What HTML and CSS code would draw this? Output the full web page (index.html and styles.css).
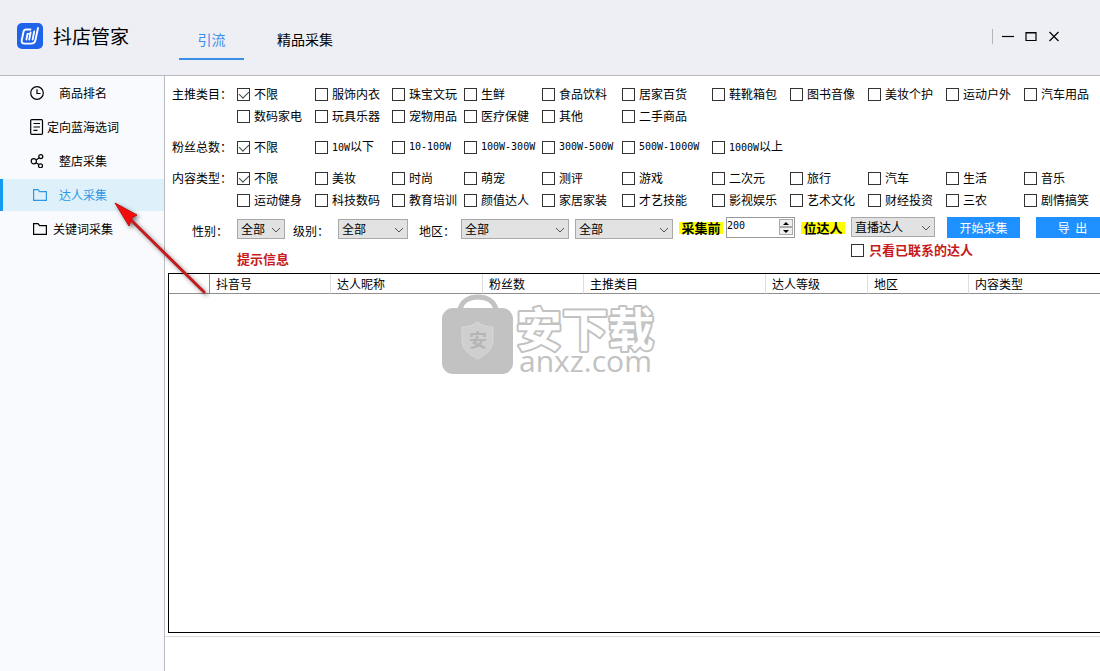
FILE: index.html
```html
<!DOCTYPE html>
<html lang="zh-CN">
<head>
<meta charset="utf-8">
<title>抖店管家</title>
<link rel="stylesheet" href="styles.css">
</head>
<body>
<div class="app">
  <header class="topbar">
    <div class="brand">
      <svg class="logo" viewBox="0 0 26 26" aria-hidden="true">
        <rect width="26" height="26" rx="5" fill="#1f63ea"/>
        <g fill="none" stroke="#fff" stroke-linecap="round" stroke-linejoin="round">
          <path stroke-width="1.9" d="M13.500 6.500H9.200Q7 6.500 6.500 8.700L4.700 17.400Q4.400 20.600 7.500 20.600H14Q17.800 20.600 18.500 16.800L21 5"/>
          <path stroke-width="1.8" d="M9.400 16.500L10.500 10.800H11.500M13.600 9.500L12.200 16.500M17.200 8.500L15.600 16.500"/>
        </g>
      </svg>
      <h1 class="brand-name">抖店管家</h1>
    </div>
    <nav class="tabs">
      <a class="tab tab-active" href="#">引流</a>
      <a class="tab" href="#">精品采集</a>
    </nav>
    <div class="window-controls">
      <button class="win-btn" aria-label="最小化"><svg viewBox="0 0 12 12"><path d="M0 5.500h12"/></svg></button>
      <button class="win-btn" aria-label="最大化"><svg viewBox="0 0 12 12"><path d="M1 1.500h10v8H1zM1 2h10"/></svg></button>
      <button class="win-btn" aria-label="关闭"><svg viewBox="0 0 12 12"><path d="M1.500 1l9 9M10.500 1l-9 9"/></svg></button>
    </div>
  </header>

  <div class="body">
    <nav class="sidebar">
      <a class="side-item" href="#">
        <svg class="side-icon" viewBox="0 0 14 14"><circle cx="7" cy="7" r="6.300"/><path d="M7 3.200V7.500H10.500"/></svg>
        <span>商品排名</span>
      </a>
      <a class="side-item side-item-tight" href="#">
        <svg class="side-icon side-icon-tall" viewBox="0 0 14 16"><rect x=".7" y=".7" width="11.800" height="14.600" rx="1"/><path d="M3.500 4.500h6.500M3.500 8h6.500M3.500 11.300h4"/></svg>
        <span>定向蓝海选词</span>
      </a>
      <a class="side-item" href="#">
        <svg class="side-icon" viewBox="0 0 14 14"><circle cx="3.800" cy="7.300" r="2.600"/><circle cx="10.800" cy="2.600" r="2"/><circle cx="10.500" cy="11.800" r="2"/><path d="M6.100 5.900L9 4M6.100 8.800L8.800 10.600"/></svg>
        <span>整店采集</span>
      </a>
      <a class="side-item side-item-folder side-item-active" href="#">
        <svg class="side-icon" viewBox="0 0 14 14"><path d="M.6 1.600H5L6.700 3.600H13.400V12.400H.6Z"/></svg>
        <span>达人采集</span>
      </a>
      <a class="side-item side-item-folder side-item-near" href="#">
        <svg class="side-icon" viewBox="0 0 14 14"><path d="M.6 1.600H5L6.700 3.600H13.400V12.400H.6Z"/></svg>
        <span>关键词采集</span>
      </a>
    </nav>

    <main class="main">
      <form class="filters">
        <fieldset class="group">
          <legend class="group-name">主推类目：</legend>
          <div class="options">
            <label class="option"><input type="checkbox" class="check" checked>不限</label>
            <label class="option"><input type="checkbox" class="check">服饰内衣</label>
            <label class="option"><input type="checkbox" class="check">珠宝文玩</label>
            <label class="option"><input type="checkbox" class="check">生鲜</label>
            <label class="option"><input type="checkbox" class="check">食品饮料</label>
            <label class="option"><input type="checkbox" class="check">居家百货</label>
            <label class="option"><input type="checkbox" class="check">鞋靴箱包</label>
            <label class="option"><input type="checkbox" class="check">图书音像</label>
            <label class="option"><input type="checkbox" class="check">美妆个护</label>
            <label class="option"><input type="checkbox" class="check">运动户外</label>
            <label class="option"><input type="checkbox" class="check">汽车用品</label>
            <label class="option"><input type="checkbox" class="check">数码家电</label>
            <label class="option"><input type="checkbox" class="check">玩具乐器</label>
            <label class="option"><input type="checkbox" class="check">宠物用品</label>
            <label class="option"><input type="checkbox" class="check">医疗保健</label>
            <label class="option"><input type="checkbox" class="check">其他</label>
            <label class="option"><input type="checkbox" class="check">二手商品</label>
          </div>
        </fieldset>
        <fieldset class="group">
          <legend class="group-name">粉丝总数：</legend>
          <div class="options">
            <label class="option"><input type="checkbox" class="check" checked>不限</label>
            <label class="option"><input type="checkbox" class="check"><span><span class="num">10W</span>以下</span></label>
            <label class="option"><input type="checkbox" class="check"><span class="num">10-100W</span></label>
            <label class="option"><input type="checkbox" class="check"><span class="num">100W-300W</span></label>
            <label class="option"><input type="checkbox" class="check"><span class="num">300W-500W</span></label>
            <label class="option"><input type="checkbox" class="check"><span class="num">500W-1000W</span></label>
            <label class="option"><input type="checkbox" class="check"><span><span class="num">1000W</span>以上</span></label>
          </div>
        </fieldset>
        <fieldset class="group">
          <legend class="group-name">内容类型：</legend>
          <div class="options">
            <label class="option"><input type="checkbox" class="check" checked>不限</label>
            <label class="option"><input type="checkbox" class="check">美妆</label>
            <label class="option"><input type="checkbox" class="check">时尚</label>
            <label class="option"><input type="checkbox" class="check">萌宠</label>
            <label class="option"><input type="checkbox" class="check">测评</label>
            <label class="option"><input type="checkbox" class="check">游戏</label>
            <label class="option"><input type="checkbox" class="check">二次元</label>
            <label class="option"><input type="checkbox" class="check">旅行</label>
            <label class="option"><input type="checkbox" class="check">汽车</label>
            <label class="option"><input type="checkbox" class="check">生活</label>
            <label class="option"><input type="checkbox" class="check">音乐</label>
            <label class="option"><input type="checkbox" class="check">运动健身</label>
            <label class="option"><input type="checkbox" class="check">科技数码</label>
            <label class="option"><input type="checkbox" class="check">教育培训</label>
            <label class="option"><input type="checkbox" class="check">颜值达人</label>
            <label class="option"><input type="checkbox" class="check">家居家装</label>
            <label class="option"><input type="checkbox" class="check">才艺技能</label>
            <label class="option"><input type="checkbox" class="check">影视娱乐</label>
            <label class="option"><input type="checkbox" class="check">艺术文化</label>
            <label class="option"><input type="checkbox" class="check">财经投资</label>
            <label class="option"><input type="checkbox" class="check">三农</label>
            <label class="option"><input type="checkbox" class="check">剧情搞笑</label>
          </div>
        </fieldset>

        <div class="toolbar">
          <div class="field">
            <label class="field-name" for="gender">性别：</label>
            <div class="picker picker-xs"><select id="gender"><option>全部</option></select><svg viewBox="0 0 10 6"><path d="M1 1l4 4 4-4"/></svg></div>
          </div>
          <div class="field">
            <label class="field-name" for="level">级别：</label>
            <div class="picker picker-s"><select id="level"><option>全部</option></select><svg viewBox="0 0 10 6"><path d="M1 1l4 4 4-4"/></svg></div>
          </div>
          <div class="field field-area">
            <label class="field-name" for="province">地区：</label>
            <div class="picker picker-l"><select id="province"><option>全部</option></select><svg viewBox="0 0 10 6"><path d="M1 1l4 4 4-4"/></svg></div>
            <div class="picker picker-m"><select id="city" aria-label="城市"><option>全部</option></select><svg viewBox="0 0 10 6"><path d="M1 1l4 4 4-4"/></svg></div>
          </div>
          <div class="limit">
            <label class="mark" for="limit">采集前</label>
            <div class="spinner">
              <input id="limit" class="spinner-input" type="text" value="200">
              <div class="spinner-buttons">
                <button type="button" aria-label="增加"><svg viewBox="0 0 6 3"><path d="M3 0l3 3H0z"/></svg></button>
                <button type="button" aria-label="减少"><svg viewBox="0 0 6 3"><path d="M3 3l3-3H0z"/></svg></button>
              </div>
            </div>
            <label class="mark" for="kind">位达人</label>
            <div class="picker picker-kind"><select id="kind"><option>直播达人</option></select><svg viewBox="0 0 10 6"><path d="M1 1l4 4 4-4"/></svg></div>
          </div>
          <div class="actions">
            <button type="button" class="action">开始采集</button>
            <button type="button" class="action">导&nbsp; 出</button>
          </div>
        </div>
        <div class="notes">
          <p class="hint">提示信息</p>
          <label class="contacted"><input type="checkbox" class="check">只看已联系的达人</label>
        </div>
      </form>

      <section class="results">
        <table class="grid">
          <colgroup>
            <col class="c-index"><col class="c-id"><col class="c-nick"><col class="c-fans"><col class="c-category"><col class="c-level"><col class="c-area"><col>
          </colgroup>
          <thead>
            <tr><th></th><th>抖音号</th><th>达人昵称</th><th>粉丝数</th><th>主推类目</th><th>达人等级</th><th>地区</th><th>内容类型</th></tr>
          </thead>
        </table>
      </section>
      <footer class="statusbar"></footer>
    </main>
  </div>

  <svg class="watermark" viewBox="0 0 220 88" aria-hidden="true">
    <path d="M18 15C20 7 27 3 36 3s16 4 18 12" fill="none" stroke="#c2c2c2" stroke-width="5"/>
    <rect y="14" width="71" height="66" rx="11" fill="#c2c2c2"/>
    <path d="M20 33Q29 33 35.500 28Q42 33 51 33V48Q50 58 35.500 65Q21 58 20 48Z" fill="#cfcfcf" stroke="#d8d8d8"/>
    <text class="wm-shield" x="36" y="53" text-anchor="middle">安</text>
    <text class="wm-name" x="74" y="52">安下载</text>
    <text class="wm-site" x="77" y="78">anxz.com</text>
  </svg>

  <svg class="pointer" viewBox="0 0 100 100" aria-hidden="true">
    <path class="pointer-shaft" d="M21 20L94 92"/>
    <path class="pointer-head" d="M5 3L27 15L22 18L19 26Z"/>
  </svg>
</div>
</body>
</html>
```

FILE: styles.css
```css
* { box-sizing: border-box; }

body {
  margin: 0;
  font-family: "Noto Sans CJK SC", sans-serif;
  font-size: 12px;
  line-height: 16px;
  color: #000;
  background: #fff;
}

button, select, input { font: inherit; color: inherit; margin: 0; }
a { color: inherit; text-decoration: none; }

.app {
  position: relative;
  display: flex;
  flex-direction: column;
  min-height: 100vh;
  overflow: hidden;
}

/* Top bar */
.topbar {
  display: flex;
  height: 76px;
  background: #eeeff5;
  border-bottom: 1px solid #b9b9c1;
}
.brand {
  display: flex;
  align-items: center;
  gap: 10px;
  width: 179px;
  padding: 0 0 4px 17px;
}
.logo { width: 26px; height: 26px; }
.brand-name { margin: 0; font-size: 19px; line-height: 26px; font-weight: 400; }
.tabs { display: flex; gap: 16px; padding-top: 20px; height: 60px; }
.tab {
  padding: 8px 17px 0;
  min-width: 65px;
  text-align: center;
  font-size: 14px;
  line-height: 22px;
  border-bottom: 2px solid transparent;
}
.tab-active { color: #3a90e5; border-bottom-color: #3a90e5; }
.window-controls {
  display: flex;
  align-items: center;
  gap: 11px;
  height: 15px;
  margin: 29px 40px 0 auto;
  padding-left: 9px;
  border-left: 1px solid #b5b5b9;
}
.win-btn { display: flex; padding: 0; border: 0; background: none; }
.win-btn svg { width: 12px; height: 12px; fill: none; stroke: #000; stroke-width: 1.2; }

.body { display: flex; flex: 1; }

/* Sidebar */
.sidebar {
  display: flex;
  flex-direction: column;
  flex: none;
  gap: 2px;
  width: 165px;
  padding-top: 1px;
  background: #f8fafd;
  border-right: 1px solid #b9bbc1;
}
.side-item {
  display: flex;
  align-items: center;
  gap: 15px;
  height: 32px;
  padding-left: 27px;
  border-left: 3px solid transparent;
}
.side-item-tight { gap: 3px; }
.side-item-folder { gap: 12px; padding-left: 30px; }
.side-item-near { gap: 6px; }
.side-item-active { color: #2f97e3; background: #def1fb; border-left-color: #129bf0; }
.side-icon { width: 14px; height: 14px; fill: none; stroke: currentColor; stroke-width: 1.2; }
.side-icon-tall { height: 16px; }

/* Filters */
.main { display: flex; flex-direction: column; flex: 1; min-width: 0; overflow: hidden; }
.filters { padding: 7px 0 0 7px; }
.group {
  display: flex;
  margin: 0 0 9px;
  padding: 0;
  border: 0;
  min-width: 0;
}
.group:last-of-type { margin-bottom: 6px; }
.group-name { float: left; flex: none; width: 65px; padding: 0; line-height: 22px; }
.options {
  display: grid;
  flex: none;
  grid-template-columns: 78px 77px 72px 78px 80px 90px repeat(5, 78px);
  grid-auto-rows: 22px;
}
.option { display: flex; align-items: center; gap: 4px; white-space: nowrap; }
.num { font-family: "DejaVu Sans Mono", monospace; font-size: 10px; }
.check {
  appearance: none;
  display: flex;
  flex: none;
  justify-content: center;
  width: 13px;
  height: 13px;
  background: #fff;
  border: 1px solid #333;
}
.check:checked::after {
  content: "";
  width: 5px;
  height: 8px;
  border: solid #444;
  border-width: 0 1px 1px 0;
  transform: rotate(45deg);
}

/* Toolbar */
.toolbar { display: flex; align-items: flex-start; height: 27px; }
.toolbar > * { flex: none; }
.field { display: flex; gap: 9px; margin: 2px 8px 0 20px; }
.field + .field { margin-left: 0; }
.field-name { width: 36px; padding-top: 4px; white-space: nowrap; }
.toolbar .field-area { gap: 6px; padding-left: 3px; margin-right: 6px; }
.picker { position: relative; height: 20px; }
.picker select {
  appearance: none;
  display: block;
  width: 100%;
  height: 20px;
  padding: 0 16px 0 3px;
  line-height: 18px;
  background: #e2e2e2;
  border: 1px solid #a9a9a9;
  border-radius: 0;
}
.picker svg {
  position: absolute;
  right: 4px;
  top: 8px;
  width: 10px;
  height: 6px;
  fill: none;
  stroke: #555;
  pointer-events: none;
}
.picker-xs { width: 48px; }
.picker-s { width: 70px; }
.picker-m { width: 98px; }
.picker-l { width: 108px; }
.picker-kind { width: 84px; }
.limit { display: flex; align-items: flex-start; }
.mark {
  width: 44px;
  margin-top: 5px;
  text-align: center;
  font-size: 13px;
  line-height: 12px;
  font-weight: 700;
  background: #ff0;
}
.spinner {
  display: flex;
  width: 69px;
  height: 21px;
  margin: 0 6px 0 3px;
  border: 1px solid #999;
  background: #fff;
}
.limit .picker { margin-left: 6px; }
.spinner-input {
  flex: 1;
  min-width: 0;
  height: 16px;
  padding: 0;
  border: 0;
  background: none;
  font-family: "DejaVu Sans Mono", monospace;
  font-size: 10px;
}
.spinner-buttons { display: flex; flex-direction: column; padding: 1px; }
.spinner-buttons button {
  display: flex;
  align-items: center;
  justify-content: center;
  width: 14px;
  height: 8px;
  padding: 0;
  background: #efefef;
  border: 1px solid #aaa;
}
.spinner-buttons svg { width: 6px; height: 3px; }
.actions { display: flex; gap: 16px; padding-left: 12px; }
.action {
  width: 73px;
  height: 21px;
  padding: 0;
  color: #fff;
  background: #1e90ff;
  border: 0;
}

.notes {
  display: flex;
  align-items: flex-start;
  height: 29px;
  padding-left: 65px;
  font-size: 13px;
  font-weight: 700;
  color: #c81a1a;
}
.hint { width: 614px; margin: 7px 0 0; }
.contacted { display: flex; align-items: center; gap: 5px; margin-top: -2px; }

/* Results */
.results {
  flex: 1;
  margin: 0 0 3px 3px;
  border: 1px solid #000;
  border-right: 0;
}
.grid { width: 100%; table-layout: fixed; border-collapse: separate; border-spacing: 0; }
.grid th {
  height: 20px;
  padding: 0 0 0 6px;
  text-align: left;
  font-weight: 400;
  white-space: nowrap;
  border-bottom: 1px solid #8f8f8f;
  border-right: 1px solid #dedede;
}
.grid th:first-child { border-right-color: #8f8f8f; }
.grid th:last-child { border-right: 0; }
.c-index { width: 41px; }
.c-id { width: 121px; }
.c-nick { width: 152px; }
.c-fans { width: 101px; }
.c-category { width: 182px; }
.c-level { width: 102px; }
.c-area { width: 101px; }
.statusbar { height: 35px; border-top: 1px solid #d9d9d9; }

/* Overlays */
.watermark {
  position: absolute;
  left: 442px;
  top: 294px;
  width: 220px;
  height: 88px;
  pointer-events: none;
}
.wm-shield { font-size: 18px; fill: #b5b5b5; font-weight: 700; }
.wm-name { font-size: 46px; font-weight: 700; fill: #fff; stroke: #c2c2c2; stroke-width: 4px; stroke-linejoin: round; paint-order: stroke; }
.wm-site { font-family: "Open Sans", sans-serif; font-size: 30px; font-weight: 500; fill: #c2c2c2; }
.pointer {
  position: absolute;
  left: 110px;
  top: 200px;
  width: 100px;
  height: 100px;
  pointer-events: none;
  filter: drop-shadow(2px 2px 2px rgba(0, 0, 0, .5));
}
.pointer-shaft { fill: none; stroke: #c31c1f; stroke-width: 3; stroke-linecap: round; }
.pointer-head { fill: #f20c0c; stroke: #b81518; }
```
